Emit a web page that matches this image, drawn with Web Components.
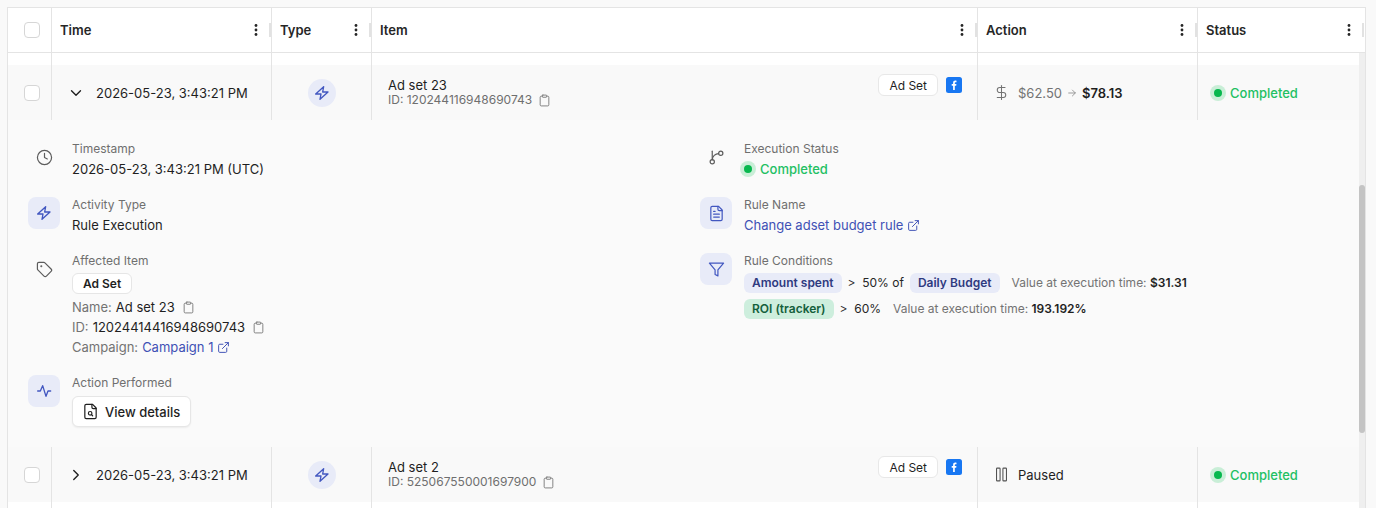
<!DOCTYPE html>
<html lang="en">
<head>
<meta charset="utf-8">
<title>Activity log</title>
<style>
  html, body { margin: 0; height: 508px; overflow: hidden; }
  body {
    background: #f9f9f9;
    font-family: Inter, "Liberation Sans", sans-serif;
    color: #1a1a1a;
    --cols: 43px 220px 100px 606px 220px 1fr;
    --line: #e4e4e4;
  }
</style>
</head>
<body>
<activity-log>
  <log-head></log-head>
  <log-spacer></log-spacer>
  <log-row time="2026-05-23, 3:43:21 PM" name="Ad set 23" item-id="120244116948690743" open>
    <span slot="action">
      <ui-icon name="dollar" size="17" stroke="1.500" color="#737373" style="margin-right:8px"></ui-icon>
      <span style="color:#737373">$62.50</span>
      <ui-icon name="arrow" size="10" color="#8a8a8a" style="margin:0 5px"></ui-icon>
      <b style="font-weight:600">$78.13</b>
    </span>
  </log-row>
  <log-detail>
    <div slot="left">
      <detail-item icon="clock" label="Timestamp" plain>2026-05-23, 3:43:21 PM (UTC)</detail-item>
      <detail-item icon="zap" size="16" label="Activity Type">Rule Execution</detail-item>
      <detail-item icon="tag" label="Affected Item" plain>
        <item-facts name="Ad set 23" item-id="12024414416948690743" campaign="Campaign 1"></item-facts>
      </detail-item>
      <detail-item icon="activity" size="16" label="Action Performed"><view-button>View details</view-button></detail-item>
    </div>
    <div slot="right">
      <detail-item icon="branch" label="Execution Status" plain><status-pill style="margin-left:-4px"></status-pill></detail-item>
      <detail-item icon="file" label="Rule Name"><link-text>Change adset budget rule</link-text></detail-item>
      <detail-item icon="funnel" label="Rule Conditions">
        <rule-line value="$31.31">
          <rule-chip>Amount spent</rule-chip><span>&gt;&nbsp; 50% of</span><rule-chip>Daily Budget</rule-chip>
        </rule-line>
        <rule-line value="193.192%">
          <rule-chip tone="green">ROI (tracker)</rule-chip><span>&gt;&nbsp; 60%</span>
        </rule-line>
      </detail-item>
    </div>
  </log-detail>
  <log-row time="2026-05-23, 3:43:21 PM" name="Ad set 2" item-id="525067550001697900">
    <span slot="action">
      <ui-icon name="pause" size="17" stroke="1.500" color="#525252" style="margin-right:8px"></ui-icon>
      <span>Paused</span>
    </span>
  </log-row>
  <log-spacer></log-spacer>
</activity-log>

<script>
// Trazos de los iconos (viewBox 24x24)
const ICONS = {
  zap: '<path d="M14.500 2.500 2.500 13.500h8l-1.500 8 12-11h-8z"/>',
  clock: '<circle cx="12" cy="12" r="10"/><path d="M12 6v6l4 2"/>',
  tag: '<path d="M12.586 2.586A2 2 0 0 0 11.172 2H4a2 2 0 0 0-2 2v7.172a2 2 0 0 0 .586 1.414l8.704 8.704a2.426 2.426 0 0 0 3.42 0l6.58-6.58a2.426 2.426 0 0 0 0-3.42z"/><circle cx="7.500" cy="7.500" r=".6"/>',
  activity: '<path d="M2.500 12h4l3.500-8 5 16 3-8h4"/>',
  branch: '<path d="M6 3v12"/><circle cx="6" cy="18" r="3"/><circle cx="18" cy="6" r="3"/><path d="M15 6.500a9 9 0 0 0-9 8.500"/>',
  file: '<path d="M15 2H6a2 2 0 0 0-2 2v16a2 2 0 0 0 2 2h12a2 2 0 0 0 2-2V7z"/><path d="M14 2v4a2 2 0 0 0 2 2h4"/><path d="M10 9H8M16 13H8M16 17H8"/>',
  funnel: '<path d="M22 3H2l8 9.460V19l4 2v-8.540z"/>',
  external: '<path d="M15 3h6v6"/><path d="M10 14 21 3"/><path d="M18 13v6a2 2 0 0 1-2 2H5a2 2 0 0 1-2-2V8a2 2 0 0 1 2-2h6"/>',
  clipboard: '<rect x="8" y="2" width="8" height="4" rx="1"/><path d="M16 4h2a2 2 0 0 1 2 2v14a2 2 0 0 1-2 2H6a2 2 0 0 1-2-2V6a2 2 0 0 1 2-2h2"/>',
  search: '<path d="M14 2v4a2 2 0 0 0 2 2h4"/><path d="M15 2H6a2 2 0 0 0-2 2v16a2 2 0 0 0 2 2h12a2 2 0 0 0 2-2V7z"/><circle cx="11.500" cy="14.500" r="2.500"/><path d="m13.300 16.300 1.700 1.700"/>',
  dollar: '<path d="M12 2v20"/><path d="M17 5H9.500a3.500 3.500 0 0 0 0 7h5a3.500 3.500 0 0 1 0 7H6"/>',
  pause: '<rect x="5" y="3" width="5" height="18" rx="1"/><rect x="14" y="3" width="5" height="18" rx="1"/>',
  arrow: '<path d="M4 12h16M13 5l7 7-7 7"/>',
  down: '<path d="m6 9 6 6 6-6"/>',
  right: '<path d="m9 6 6 6-6 6"/>'
};

class UiIcon extends HTMLElement {
  connectedCallback() {
    const size = this.getAttribute('size') || 16;
    const color = this.getAttribute('color') || 'currentColor';
    const width = this.getAttribute('stroke') || 2;
    this.attachShadow({ mode: 'open' }).innerHTML = `
      <style>:host { display: inline-flex; flex: none; vertical-align: middle; }</style>
      <svg width="${size}" height="${size}" viewBox="0 0 24 24" fill="none" stroke="${color}"
        stroke-width="${width}" stroke-linecap="round" stroke-linejoin="round">${ICONS[this.getAttribute('name')]}</svg>`;
  }
}

// Contenedor de la tabla, con la barra de scroll encima
class ActivityLog extends HTMLElement {
  connectedCallback() {
    this.attachShadow({ mode: 'open' }).innerHTML = `
      <style>
        :host {
          display: block; position: relative; margin: 7px 10px 0 7px; height: 501px;
          background: #fff; border: 1px solid var(--line); border-bottom: 0; box-sizing: border-box; overflow: hidden;
        }
        .track { position: absolute; top: 45px; right: 0; bottom: 0; width: 6px; background: #efefef; }
        .thumb { position: absolute; top: 132px; left: 0; width: 6px; height: 248px; border-radius: 3px; background: #c4c4c4; }
      </style>
      <slot></slot>
      <div class="track"><div class="thumb"></div></div>`;
  }
}

class LogHead extends HTMLElement {
  connectedCallback() {
    const col = (t) => `
      <div class="col"><span>${t}</span>
        <svg class="dots" width="4" height="14" viewBox="0 0 4 14" fill="#262626"><circle cx="2" cy="2.500" r="1.400"/><circle cx="2" cy="7" r="1.400"/><circle cx="2" cy="11.500" r="1.400"/></svg>
        <i></i>
      </div>`;
    this.attachShadow({ mode: 'open' }).innerHTML = `
      <style>
        :host { display: grid; grid-template-columns: var(--cols); height: 44px; border-bottom: 1px solid var(--line); background: #fff; }
        .box { display: flex; align-items: center; justify-content: center; padding-left: 5px; }
        .col { display: flex; align-items: center; padding: 0 7px 0 8px; border-left: 1px solid var(--line);
          font-size: 13px; font-weight: 600; color: #262626; position: relative; }
        .col:last-child { padding-right: 8px; }
        .col:last-child i { right: 1px; }
        .col span { flex: 1; }
        .dots { margin-right: 6px; }
        i { position: absolute; right: 0; top: 15px; width: 2px; height: 14px; background: #e2e2e2; }
      </style>
      <div class="box"><check-box></check-box></div>
      ${['Time', 'Type', 'Item', 'Action', 'Status'].map(col).join('')}`;
  }
}

class CheckBox extends HTMLElement {
  connectedCallback() {
    this.attachShadow({ mode: 'open' }).innerHTML = `
      <style>:host { display: block; width: 16px; height: 16px; box-sizing: border-box; background: #fff; border: 1px solid #d6d6d6; border-radius: 4px; }</style>`;
  }
}

// Franja vacía con las líneas de columna
class LogSpacer extends HTMLElement {
  connectedCallback() {
    this.attachShadow({ mode: 'open' }).innerHTML = `
      <style>
        :host { display: grid; grid-template-columns: var(--cols); height: 12px; background: #fff; }
        div + div { border-left: 1px solid var(--line); }
      </style>
      <div></div><div></div><div></div><div></div><div></div><div></div>`;
  }
}

class LogRow extends HTMLElement {
  connectedCallback() {
    const open = this.hasAttribute('open');
    this.attachShadow({ mode: 'open' }).innerHTML = `
      <style>
        :host { display: grid; grid-template-columns: var(--cols); height: 55px; background: #f9f9f9; font-size: 13px; }
        .c { display: flex; align-items: center; min-width: 0; }
        .c + .c { border-left: 1px solid var(--line); }
        .box { justify-content: center; padding-left: 5px; }
        .time { padding-left: 15px; gap: 11px; color: #1f1f1f; }
        .type { justify-content: center; }
        .bolt { width: 28px; height: 28px; border-radius: 50%; background: #e8ebf8; display: flex; align-items: center; justify-content: center; }
        .item { padding: 0 15px 0 16px; justify-content: space-between; align-items: flex-start; }
        .name { margin-top: 12px; line-height: 16px; font-size: 13px; color: #1f1f1f; }
        .id { line-height: 14px; font-size: 12px; color: #6f6f6f; display: flex; align-items: center; gap: 6px; }
        .tail { display: flex; align-items: center; gap: 8px; margin-top: 9px; }
        .kind { height: 22px; box-sizing: border-box; padding: 0 10px; display: flex; align-items: center; font-size: 12px; font-weight: 400; border: 1px solid #e8e8e8; border-radius: 6px; background: #fff; color: #1f1f1f; }
        .fb { width: 16px; height: 16px; display: block; }
        .act { padding-left: 15px; font-size: 13px; color: #1f1f1f; }
        .act ::slotted(span) { display: flex; align-items: center; }
        .st { padding-left: 12px; padding-right: 6px; }
      </style>
      <div class="c box"><check-box></check-box></div>
      <div class="c time"><ui-icon name="${open ? 'down' : 'right'}" size="18" stroke="1.800" color="#1f1f1f"></ui-icon><span>${this.getAttribute('time')}</span></div>
      <div class="c type"><div class="bolt"><ui-icon name="zap" size="16" color="#4257c0" stroke="2"></ui-icon></div></div>
      <div class="c item">
        <div>
          <div class="name">${this.getAttribute('name')}</div>
          <div class="id">ID: ${this.getAttribute('item-id')} <ui-icon name="clipboard" size="13" stroke="1.700" color="#7a7a7a"></ui-icon></div>
        </div>
        <div class="tail">
          <div class="kind">Ad Set</div>
          <svg class="fb" viewBox="0 0 16 16"><rect width="16" height="16" rx="2.500" fill="#1877f2"/><path d="M8.800 13V8.700h1.400l.2-1.700H8.800V6c0-.5.200-.8.800-.8h.9V3.700c-.3 0-.7-.1-1.200-.1-1.300 0-2.200.8-2.200 2.200V7H5.700v1.700h1.400V13z" fill="#fff"/></svg>
        </div>
      </div>
      <div class="c act"><slot name="action"></slot></div>
      <div class="c st"><status-pill></status-pill></div>`;
  }
}

class StatusPill extends HTMLElement {
  connectedCallback() {
    this.attachShadow({ mode: 'open' }).innerHTML = `
      <style>
        :host { display: flex; width: fit-content; align-items: center; gap: 4px; font-size: 13px; font-weight: 500; color: #22c063; line-height: 20px; }
        .halo { width: 16px; height: 16px; border-radius: 50%; background: #c9eed7; display: flex; align-items: center; justify-content: center; }
        .dot { width: 8px; height: 8px; border-radius: 50%; background: #08b84e; }
      </style>
      <span class="halo"><span class="dot"></span></span><span>Completed</span>`;
  }
}

class LogDetail extends HTMLElement {
  connectedCallback() {
    this.attachShadow({ mode: 'open' }).innerHTML = `
      <style>
        :host { display: grid; grid-template-columns: 672px 1fr; height: 327px; box-sizing: border-box; padding: 21px 0 0 20px; background: #fafafa; }
        ::slotted(div) { display: flex; flex-direction: column; gap: 18px; }
      </style>
      <slot name="left"></slot><slot name="right"></slot>`;
  }
}

class DetailItem extends HTMLElement {
  connectedCallback() {
    const plain = this.hasAttribute('plain');
    const size = this.getAttribute('size') || 17;
    this.attachShadow({ mode: 'open' }).innerHTML = `
      <style>
        :host { display: flex; gap: 12px; font-size: 13px; line-height: 20px; color: #1f1f1f; }
        .tile { width: 32px; height: 32px; flex: none; border-radius: 8px; display: flex; align-items: center; justify-content: center; }
        .tile.on { background: #e8ebf8; }
        .body { display: flex; flex-direction: column; align-items: flex-start; }
        .label { font-size: 12px; line-height: 16px; margin-bottom: 2px; color: #6f6f6f; font-weight: 400; }
      </style>
      <div class="tile ${plain ? '' : 'on'}"><ui-icon name="${this.getAttribute('icon')}" size="${size}" color="${plain ? '#5c5c5c' : '#4257c0'}" stroke="${size == 16 ? 2 : 1.700}"></ui-icon></div>
      <div class="body">
        <div class="label">${this.getAttribute('label')}</div>
        <slot></slot>
      </div>`;
  }
}

class LinkText extends HTMLElement {
  connectedCallback() {
    this.attachShadow({ mode: 'open' }).innerHTML = `
      <style>:host { display: inline-flex; align-items: center; gap: 4px; color: #3f51b5; }</style>
      <slot></slot><ui-icon name="external" size="13" color="#3f51b5" stroke="1.800"></ui-icon>`;
  }
}

class ItemFacts extends HTMLElement {
  connectedCallback() {
    this.attachShadow({ mode: 'open' }).innerHTML = `
      <style>
        :host { display: block; color: #1f1f1f; }
        .chip { display: flex; width: fit-content; align-items: center; height: 21px; box-sizing: border-box; padding: 0 10px; margin: 2px 0 3px; font-size: 12px; font-weight: 600; background: #fff; border: 1px solid #e6e6e6; border-radius: 6px; }
        .row { display: flex; align-items: center; gap: 4px; }
        .k { color: #737373; }
      </style>
      <span class="chip">Ad Set</span>
      <div class="row"><span class="k">Name:</span> <span>${this.getAttribute('name')}</span><ui-icon name="clipboard" size="13" stroke="1.700" color="#7a7a7a" style="margin-left:3px"></ui-icon></div>
      <div class="row"><span class="k">ID:</span> <span>${this.getAttribute('item-id')}</span><ui-icon name="clipboard" size="13" stroke="1.700" color="#7a7a7a" style="margin-left:3px"></ui-icon></div>
      <div class="row"><span class="k">Campaign:</span> <link-text>${this.getAttribute('campaign')}</link-text></div>`;
  }
}

class ViewButton extends HTMLElement {
  connectedCallback() {
    this.attachShadow({ mode: 'open' }).innerHTML = `
      <style>
        :host { display: flex; width: fit-content; align-items: center; gap: 6px; height: 31px; box-sizing: border-box; margin-top: 3px; padding: 0 10px 0 9px; font-size: 13px; font-weight: 500; color: #1f1f1f; background: #fff; border: 1px solid #e6e6e6; border-radius: 6px; box-shadow: 0 1px 2px rgba(0,0,0,.06); }
      </style>
      <ui-icon name="search" size="17" stroke="1.700" color="#1f1f1f"></ui-icon><slot></slot>`;
  }
}

class RuleChip extends HTMLElement {
  connectedCallback() {
    const green = this.getAttribute('tone') === 'green';
    this.attachShadow({ mode: 'open' }).innerHTML = `
      <style>
        :host { display: inline-flex; align-items: center; height: 20px; padding: 0 8px; border-radius: 6px; font-size: 12px; font-weight: 600;
          background: ${green ? '#cdeedd' : '#e8ebf8'}; color: ${green ? '#14603c' : '#2f3a80'}; }
      </style>
      <slot></slot>`;
  }
}

class RuleLine extends HTMLElement {
  connectedCallback() {
    this.attachShadow({ mode: 'open' }).innerHTML = `
      <style>
        :host { display: flex; align-items: center; gap: 6px; height: 20px; font-size: 12px; color: #262626; margin: 2px 0 4px; white-space: nowrap; }
        .v { margin-left: 6px; color: #737373; }
        b { font-weight: 600; color: #1f1f1f; }
      </style>
      <slot></slot><span class="v">Value at execution time: <b>${this.getAttribute('value')}</b></span>`;
  }
}

customElements.define('ui-icon', UiIcon);
customElements.define('activity-log', ActivityLog);
customElements.define('log-head', LogHead);
customElements.define('check-box', CheckBox);
customElements.define('log-spacer', LogSpacer);
customElements.define('log-row', LogRow);
customElements.define('status-pill', StatusPill);
customElements.define('log-detail', LogDetail);
customElements.define('detail-item', DetailItem);
customElements.define('link-text', LinkText);
customElements.define('item-facts', ItemFacts);
customElements.define('view-button', ViewButton);
customElements.define('rule-chip', RuleChip);
customElements.define('rule-line', RuleLine);
</script>
</body>
</html>
